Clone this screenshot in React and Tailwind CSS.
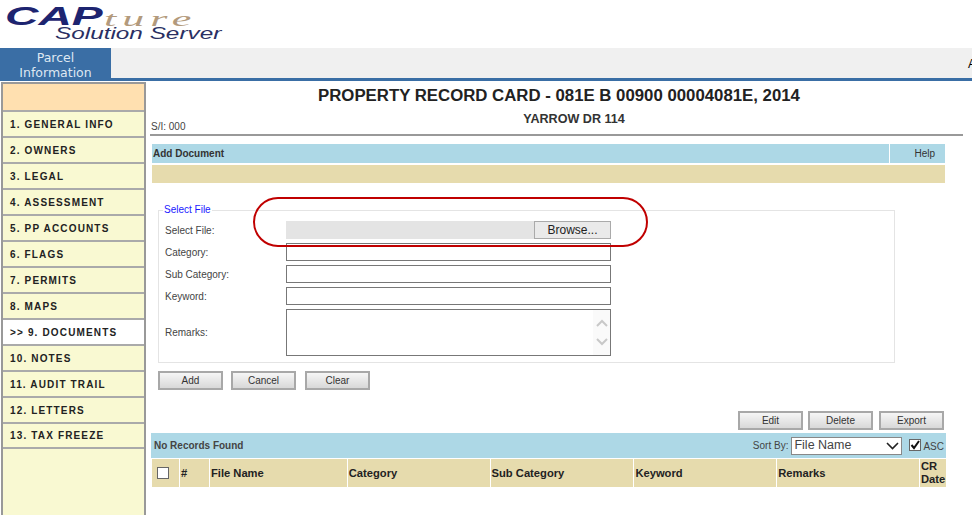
import React from 'react';

const MENU = ['1. GENERAL INFO', '2. OWNERS', '3. LEGAL', '4. ASSESSMENT', '5. PP ACCOUNTS', '6. FLAGS', '7. PERMITS', '8. MAPS', '>> 9. DOCUMENTS', '10. NOTES', '11. AUDIT TRAIL', '12. LETTERS', '13. TAX FREEZE'];

const COLS = [
  { label: '#', w: 'w-[29px]' },
  { label: 'File Name', w: 'w-[137px]' },
  { label: 'Category', w: 'w-[142px]' },
  { label: 'Sub Category', w: 'w-[143px]' },
  { label: 'Keyword', w: 'w-[142px]' },
  { label: 'Remarks', w: 'w-[142px]' },
];

function GrayButton({ children, className = '' }) {
  return (
    <button className={`h-[19px] w-[65px] border-2 border-[#a8a8a8] bg-gradient-to-b from-[#f6f6f6] to-[#d8d8d8] text-[10px] text-[#333] ${className}`}>
      {children}
    </button>
  );
}

function FormRow({ label, children, className = 'h-[18px] mb-1' }) {
  return (
    <div className={`flex items-center ${className}`}>
      <label className="w-[121px] text-[10px] text-[#444]">{label}</label>
      {children}
    </div>
  );
}

const inputCls = 'h-full w-[325px] border border-[#777] bg-white';

export default function App() {
  return (
    <div className="relative h-[515px] w-[972px] overflow-hidden bg-white font-['Liberation_Sans',Arial,sans-serif]">
      {/* logo */}
      <div className="h-[48px] pl-[5px]">
        <div className="relative h-[42px] w-[220px]">
          <span className="absolute left-0 top-[4px] origin-left text-[25px] font-bold italic leading-none text-[#1d2470] [transform:scaleX(1.85)]">CAP</span>
          <span className="absolute left-[99px] top-[8px] origin-left font-['Liberation_Serif',serif] text-[22px] italic leading-none tracking-[3px] text-[#b39a7c] [transform:scaleX(2)]">ture</span>
          <span className="absolute left-[50px] top-[26px] origin-left text-[16px] italic leading-none text-[#2a2f63] [transform:scaleX(1.52)]">Solution Server</span>
        </div>
      </div>

      {/* tab bar */}
      <div className="flex h-[30px] bg-[#f0f0f0]">
        <div className="w-[111px] bg-[#3a6ea5] pt-[2px] text-center font-['DejaVu_Sans',sans-serif] text-[12.5px] leading-[15px] text-[#dfe8f2]">
          Parcel<br />Information
        </div>
        <div className="ml-auto mr-[-4px] pt-[7px] text-[12px] text-black">A</div>
      </div>
      <div className="h-[3px] bg-[#3a6ea5]" />

      <div className="flex">
        {/* sidebar */}
        <div className="ml-px mt-px h-[433px] w-[145px] shrink-0 border-x-2 border-t-2 border-[#999] bg-[#f9f9d2]">
          <div className="h-[28px] border-b-2 border-[#aaa] bg-[#ffe0b0]" />
          {MENU.map((m, i) => (
            <div key={m} className={`flex items-center border-b-2 border-[#aaa] pl-[7px] text-[10px] font-bold tracking-[1.15px] text-[#222] ${i === 12 ? 'h-[25px]' : 'h-[26px]'} ${m.startsWith('>>') ? 'bg-white' : ''}`}>
              {m}
            </div>
          ))}
        </div>

        {/* main */}
        <div className="ml-[4px] w-[822px]">
          <div className="pr-[4px] pt-[5px] text-center text-[16.8px] font-bold leading-[20px] text-[#222]">
            PROPERTY RECORD CARD - 081E B 00900 00004081E, 2014
          </div>
          <div className="relative h-[30px] w-[813px] border-b-2 border-[#999] pl-[35px] pt-[6px] text-center text-[12.6px] font-bold leading-[14px] text-[#333]">
            <span className="absolute left-px top-[14px] text-[10px] font-normal text-[#444]">S/I: 000</span>
            YARROW DR 114
          </div>

          <div className="ml-[2px] mt-[8px] w-[793px]">
            <div className="flex h-[19px] gap-px">
              <div className="flex-1 bg-[#add8e6] pl-px text-[10px] font-bold leading-[19px] text-[#333]">Add Document</div>
              <div className="w-[55px] bg-[#add8e6] pr-[10px] text-right text-[10px] leading-[19px] text-[#333]">Help</div>
            </div>
            <div className="mt-[2px] h-[18px] bg-[#e6dbad]" />
          </div>

          {/* fieldset */}
          <fieldset className="ml-[8px] mt-[21px] h-[159px] w-[737px] border border-[#e4e4e4] pl-[6px]">
            <legend className="ml-[-2px] px-px text-[10px] leading-[12px] text-[#1a1aff]">Select File</legend>
            <div className="mt-[5px]">
              <FormRow label="Select File:">
                <div className="flex h-full w-[325px] bg-[#e4e4e4]">
                  <div className="flex-1" />
                  <div className="flex w-[77px] items-center justify-center border border-[#aaa] bg-[#eaeaea] text-[12px] text-[#222]">Browse...</div>
                </div>
              </FormRow>
              <FormRow label="Category:"><input className={inputCls} /></FormRow>
              <FormRow label="Sub Category:"><input className={inputCls} /></FormRow>
              <FormRow label="Keyword:"><input className={inputCls} /></FormRow>
              <FormRow label="Remarks:" className="mt-px h-[47px]">
                <div className={`${inputCls} flex justify-end`}>
                  <div className="flex w-[17px] flex-col items-center justify-between bg-[#fafafa] py-[9px]">
                    <svg width="12" height="8" viewBox="0 0 12 8"><path d="M1 7 L6 2 L11 7" fill="none" stroke="#c8c8c8" strokeWidth="2" /></svg>
                    <svg width="12" height="8" viewBox="0 0 12 8"><path d="M1 1 L6 6 L11 1" fill="none" stroke="#c8c8c8" strokeWidth="2" /></svg>
                  </div>
                </div>
              </FormRow>
            </div>
          </fieldset>

          <div className="ml-[8px] mt-[8px] flex">
            <GrayButton>Add</GrayButton>
            <GrayButton className="ml-[8px]">Cancel</GrayButton>
            <GrayButton className="ml-[9px]">Clear</GrayButton>
          </div>

          <div className="mt-[21px] flex w-[794px] justify-end">
            <GrayButton>Edit</GrayButton>
            <GrayButton className="ml-[5px]">Delete</GrayButton>
            <GrayButton className="ml-[6px]">Export</GrayButton>
          </div>

          {/* records */}
          <div className="ml-px mt-[3px] w-[795px]">
            <div className="flex h-[25px] items-center bg-[#add8e6] pl-[3px] text-[10px] text-[#444]">
              <span className="font-bold">No Records Found</span>
              <span className="ml-auto mr-[3px]">Sort By:</span>
              <div className="flex h-[18px] w-[111px] items-center justify-between border border-[#888] bg-white pl-[2px] pr-[2px] text-[12.5px] text-[#444]">
                File Name
                <svg width="13" height="8" viewBox="0 0 13 8"><path d="M1 1 L6.5 6.5 L12 1" fill="none" stroke="#222" strokeWidth="1.6" /></svg>
              </div>
              <div className="mb-px ml-[7px] flex h-[12px] w-[12px] items-center justify-center border border-[#666] bg-white">
                <svg width="10" height="10" viewBox="0 0 10 10"><path d="M1.5 5 L4 8 L9 1" fill="none" stroke="#111" strokeWidth="2" /></svg>
              </div>
              <span className="ml-[2px] mr-[2px] pt-[2px]">ASC</span>
            </div>
            <div className="ml-px mt-px flex h-[28px] gap-px text-[11.2px] font-bold text-[#222]">
              <div className="flex w-[27px] items-center bg-[#e6dbad] pl-[5px]">
                <div className="h-[12px] w-[12px] border border-[#666] bg-white" />
              </div>
              {COLS.map((c) => (
                <div key={c.label} className={`flex items-center bg-[#e6dbad] pl-px ${c.w}`}>{c.label}</div>
              ))}
              <div className="w-[26px] bg-[#e6dbad] pl-px pt-px leading-[13px]">CR Date</div>
            </div>
          </div>
        </div>
      </div>

      {/* hand drawn highlight over the screenshot */}
      <div className="absolute left-[253px] top-[197px] h-[50px] w-[395px] rounded-[25px] border-2 border-[#c00000]" />
    </div>
  );
}
